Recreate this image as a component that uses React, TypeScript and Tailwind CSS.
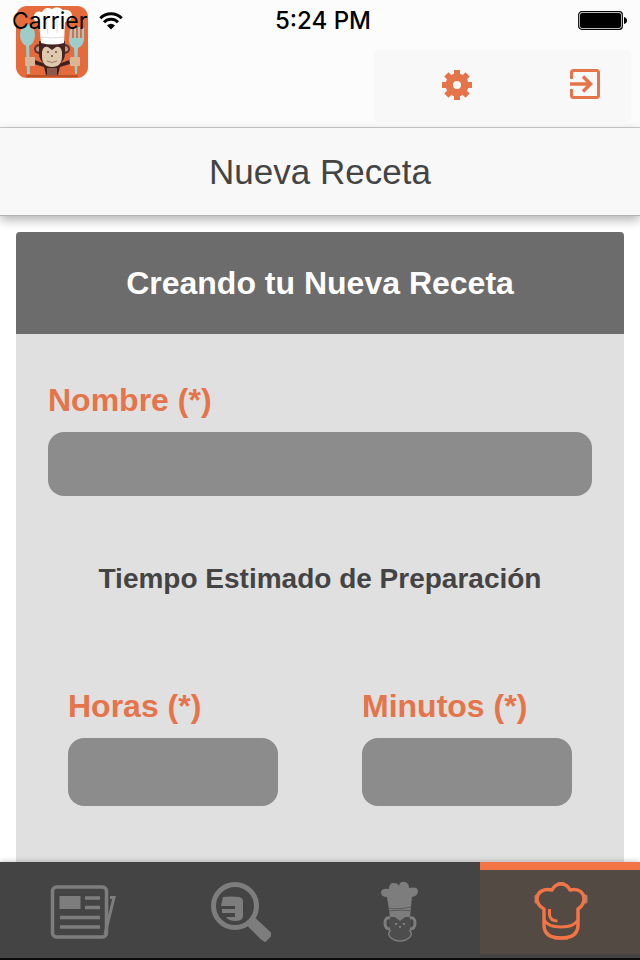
import React from "react";

const teeth = [0, 45, 90, 135, 180, 225, 270, 315];

function Logo() {
  return (
    <svg viewBox="0 0 72 72" className="absolute left-4 top-1.5 size-[72px]" role="img" aria-label="Logo">
      <rect width="72" height="72" rx="11" fill="#e56b3c" />
      <rect x="10" y="69" width="52" height="2" rx="1" fill="#b9532c" />
      <g fill="#9ccdca">
        <ellipse cx="11.5" cy="29" rx="7.5" ry="11" />
        <path d="M10 38h3l1 30h-3z" />
        <path d="M54 22h2v10h2V21h2v11h2V21h2v11h2V22h2v12q-1 6-6 8l-1 26h-2l-1-26q-5-2-5-8z" />
      </g>
      <circle cx="23" cy="43" r="5" fill="#633532" />
      <circle cx="49" cy="43" r="5" fill="#633532" />
      <circle cx="22.5" cy="43" r="2.5" fill="#c9937d" />
      <circle cx="49.5" cy="43" r="2.5" fill="#c9937d" />
      <path d="M19 54q17 8 34 0l1 4-10 3-2 8H30l-2-8-10-3z" fill="#40211f" />
      <rect x="31" y="62" width="10" height="7" fill="#8d5a4a" />
      <path d="M23 35h26v12q0 12-13 12T23 47z" fill="#432421" />
      <path d="M26 46q1-6 6-5l4 3 4-3q5-1 6 5v4q0 11-10 11T26 50z" fill="#dec9ae" />
      <path d="M31 45h2v2h-2zM39 45h2v2h-2zM35 49h2v2h-2z" fill="#8a6a58" />
      <path d="M31 55q5 3 10 0" fill="none" stroke="#9c7866" />
      <path d="M25 37 23 17q-6-1-5-8 2-5 8-3 3-6 10-3 6-4 11 1 8-1 9 5 0 6-7 7l-1 21q-11 3-23 0z" fill="#fff" />
      <path d="M25 31q11 2 23 0M30 14l2 14M41 12v15" stroke="#dcdcdc" fill="none" />
      <rect x="9" y="51" width="10" height="9" rx="1" fill="#d9b796" />
      <rect x="54" y="51" width="10" height="9" rx="1" fill="#d9b796" />
    </svg>
  );
}

function Wifi() {
  return (
    <svg viewBox="0 0 24 18" className="h-[18px] w-6" aria-label="Wi-Fi" role="img">
      <g fill="none" stroke="#000" strokeWidth="3">
        <path d="M1.3 6.2a15.2 15.2 0 0 1 21.4 0" />
        <path d="M5 10.3a9.8 9.8 0 0 1 14 0" />
      </g>
      <path d="M12 17.5 8 13.5a5.7 5.7 0 0 1 8 0z" />
    </svg>
  );
}

function Battery() {
  return (
    <svg viewBox="0 0 50 20" className="h-5 w-[50px]" role="img" aria-label="Batería">
      <rect x="0.7" y="0.7" width="43.6" height="17.6" rx="3" fill="none" stroke="#000" strokeWidth="1.2" />
      <rect x="2" y="2" width="41" height="15" rx="2" />
      <path d="M46 6q3 1 3 3.500t-3 3.500z" />
    </svg>
  );
}

function Gear() {
  return (
    <svg viewBox="-15 -15 30 30" className="size-[30px]" fill="#e6744a" aria-hidden="true">
      <path
        fillRule="evenodd"
        d="M0-11.500A11.500 11.500 0 1 1 0 11.500 11.500 11.500 0 1 1 0-11.500M0-4A4 4 0 1 0 0 4 4 4 0 1 0 0-4"
      />
      {teeth.map((a) => (
        <rect key={a} x="-3" y="-15" width="6" height="6" transform={`rotate(${a})`} />
      ))}
    </svg>
  );
}

function Exit() {
  return (
    <svg viewBox="0 0 30 30" className="size-[30px]" fill="none" stroke="#e6744a" aria-hidden="true">
      <path d="M1.500 10V3.500q0-2 2-2h23q2 0 2 2v23q0 2-2 2h-23q-2 0-2-2V20" strokeWidth="3" />
      <path d="M0 15h20M13 7.500l7.500 7.500-7.500 7.500" strokeWidth="3.500" />
    </svg>
  );
}

function News() {
  return (
    <svg viewBox="0 0 72 64" className="h-16 w-[72px]" fill="none" stroke="#7d7d7d" aria-hidden="true">
      <rect x="8.500" y="7" width="54" height="50" rx="4" strokeWidth="3.500" />
      <path d="M66 17.500h4L61 54" strokeWidth="3" />
      <rect x="15.500" y="16" width="21" height="13" fill="#7d7d7d" stroke="none" />
      <path d="M41 18h15M41 27.500h15M16 37.500h40M16 47h40" strokeWidth="3.500" />
    </svg>
  );
}

function Search() {
  return (
    <svg viewBox="0 0 72 64" className="h-16 w-[72px]" aria-hidden="true">
      <circle cx="31" cy="26" r="21.500" fill="none" stroke="#7d7d7d" strokeWidth="5" />
      <path d="M46 41 51 39 66 53 66 56 61 61 58 59 45 46z" fill="#7d7d7d" stroke="#7d7d7d" strokeWidth="2" strokeLinejoin="round" />
      <path
        d="M19 17q8-1 16 0 4 1 4 4v15q0 5-8 5-6 0-9-4h9v-4H18v-4h13v-3H17z"
        fill="#7d7d7d"
      />
    </svg>
  );
}

function Chef() {
  return (
    <svg viewBox="0 0 72 64" className="h-16 w-[72px]" aria-hidden="true">
      <path
        d="M25 30 23 17q-6 0-6-5 1-4 8-3 0-7 5-6 4 0 5 3 1-5 6-4 4 1 4 6 9-2 9 3 0 5-6 6l-2 20H26z"
        fill="#7d7d7d"
      />
      <path d="M24 28q10 2 23-1M25 31q11-2 22 0" fill="none" stroke="#5c5c5c" strokeWidth="1" />
      <path d="M25 37h22v12q0 12-11 12T25 49z" fill="#4d4d4d" />
      <g fill="none" stroke="#7d7d7d">
        <path d="M26 38q-5-1-5 5t5 6M46 38q5-1 5 5t-5 6" strokeWidth="3" />
        <path d="M27 50q-4 3-1 7 4 4 10 4t10-4q3-4-1-7" strokeWidth="1.500" />
      </g>
      <path d="m31 37 5 4 5-4zM31 43h2v2h-2zM39 43h2v2h-2zM35 46h2v2h-2z" fill="#7d7d7d" />
    </svg>
  );
}

function Hat() {
  return (
    <svg viewBox="0 0 72 64" className="h-16 w-[72px]" fill="none" aria-hidden="true">
      <path d="M12 14v6M62 14v6M35 1h4" stroke="#a88273" strokeWidth="3" strokeLinecap="round" />
      <path
        d="M20 27V43Q20 56 37 56T54 43V27Q60 23 60 17C60 10 54 6 46 8Q43 2 37 2T28 8C20 6 13 10 13 17Q13 23 20 27z"
        stroke="#f37445"
        strokeWidth="3.500"
        strokeLinejoin="round"
      />
      <path d="M20 38Q24 45 37 45T54 38M25.500 27v6q1 6 8 6M30 56h14" stroke="#f37445" strokeWidth="3" />
    </svg>
  );
}

function Field({ id, label, big }: { id: string; label: string; big?: boolean }) {
  return (
    <div className="flex flex-col">
      <label htmlFor={id} className="mb-3 text-[32px] leading-10 font-bold text-[#e6744a]">
        {label}
      </label>
      <input
        id={id}
        type={big ? "number" : "text"}
        className={
          big
            ? "h-[68px] w-full rounded-2xl bg-[#8c8c8c] px-4 text-3xl text-white outline-none"
            : "h-16 w-full rounded-2xl bg-[#8c8c8c] px-4 text-3xl text-white outline-none"
        }
      />
    </div>
  );
}

const tabs = [
  { name: "Noticias", icon: <News /> },
  { name: "Buscar", icon: <Search /> },
  { name: "Chef", icon: <Chef /> },
];

export default function App() {
  return (
    <div className="flex h-screen flex-col overflow-hidden bg-white font-['Liberation_Sans',Arial,sans-serif]">
      <header className="relative z-10 border-b border-[#cccccc] bg-[#fcfcfc] pb-[5px]">
        <Logo />
        <div className="relative grid h-10 grid-cols-3 items-center px-3 pt-0.5 font-[Inter,sans-serif] text-2xl font-medium text-black">
          <span className="flex items-center gap-3 text-[23px] font-normal">
            Carrier
            <Wifi />
          </span>
          <span className="pl-1.5 text-center">5:24 PM</span>
          <span className="flex justify-end">
            <Battery />
          </span>
        </div>
        <div className="mt-2.5 mr-[9px] ml-auto grid h-[72px] w-[257px] grid-cols-2 rounded bg-[#f8f8f8]">
          <button type="button" aria-label="Ajustes" className="flex items-center justify-center pb-0.5 pl-[38px]">
            <Gear />
          </button>
          <button type="button" aria-label="Salir" className="flex items-center justify-end pr-[31px] pb-1">
            <Exit />
          </button>
        </div>
      </header>
      <div className="relative z-10 flex h-22 shrink-0 items-center justify-center border-b border-[#b2b2b2] bg-[#f8f8f8] pt-0.5 shadow-[0_4px_10px_rgba(0,0,0,0.3)]">
        <h1 className="text-[35px] text-[#444444]">Nueva Receta</h1>
      </div>
      <main className="min-h-0 flex-1 overflow-hidden px-4 pt-4">
        <form className="min-h-full overflow-hidden rounded-t bg-[#e0e0e0]">
          <h2 className="flex h-[102px] items-center justify-center bg-[#6c6c6c] text-[32px] font-bold text-white">
            Creando tu Nueva Receta
          </h2>
          <div className="px-8 pt-[46px]">
            <Field id="nombre" label="Nombre (*)" />
            <h3 className="pt-[63px] pb-[87px] text-center text-[28px] leading-10 font-bold text-[#444444]">
              Tiempo Estimado de Preparación
            </h3>
            <div className="grid grid-cols-2 gap-[84px] pr-5 pb-16 pl-5">
              <Field id="horas" label="Horas (*)" big />
              <Field id="minutos" label="Minutos (*)" big />
            </div>
          </div>
        </form>
      </main>
      <nav className="relative grid h-[98px] shrink-0 grid-cols-4 border-b-2 border-[#0c0a0b] bg-[#444444] shadow-[0_-1px_5px_rgba(0,0,0,0.2)]">
        {tabs.map((tab) => (
          <button key={tab.name} type="button" aria-label={tab.name} className="flex items-center justify-center pt-1">
            {tab.icon}
          </button>
        ))}
        <button
          type="button"
          aria-label="Nueva receta"
          aria-current="page"
          className="mb-1 flex items-center justify-center border-t-8 border-[#f37445] bg-[#524a43] pt-1"
        >
          <Hat />
        </button>
      </nav>
    </div>
  );
}
